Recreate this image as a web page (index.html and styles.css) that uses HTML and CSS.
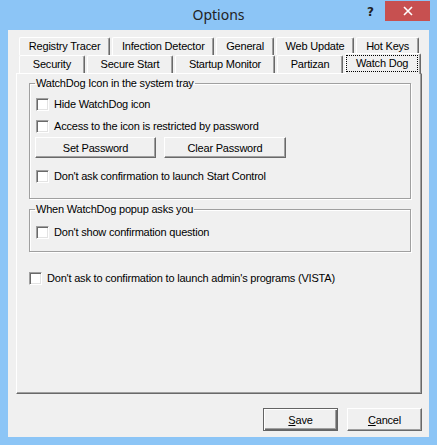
FILE: index.html
```html
<!DOCTYPE html>
<html lang="en">
<head>
	<meta charset="UTF-8">
	<title>Options</title>
	<link rel="stylesheet" href="styles.css">
</head>
<body>

	<div class="window">
		<div class="titlebar">
			<div></div>
			<div class="caption">Options</div>
			<div class="controls">
				<span class="help">?</span>
				<span class="close">
					<svg width="10" height="10" viewBox="0 0 10 10"><path d="M1 1 L9 9 M9 1 L1 9" stroke="#fff" stroke-width="1.6"/></svg>
				</span>
			</div>
		</div>

		<div class="client">
			<div class="tabs">
				<div class="tab-row back">
					<div class="tab">Registry Tracer</div>
					<div class="tab">Infection Detector</div>
					<div class="tab">General</div>
					<div class="tab">Web Update</div>
					<div class="tab">Hot Keys</div>
				</div>
				<div class="tab-row front">
					<div class="tab">Security</div>
					<div class="tab">Secure Start</div>
					<div class="tab">Startup Monitor</div>
					<div class="tab">Partizan</div>
					<div class="tab selected"><span class="focus">Watch Dog</span></div>
				</div>
			</div>

			<div class="panel">
				<fieldset class="group first">
					<legend>WatchDog Icon in the system tray</legend>
					<div class="check r1"><span class="box"></span>Hide WatchDog icon</div>
					<div class="check r2"><span class="box"></span>Access to the icon is restricted by password</div>
					<div class="btn-row">
						<div class="btn set">Set Password</div>
						<div class="btn clear">Clear Password</div>
					</div>
					<div class="check r3"><span class="box"></span>Don't ask confirmation to launch Start Control</div>
				</fieldset>

				<fieldset class="group second">
					<legend>When WatchDog popup asks you</legend>
					<div class="check r4"><span class="box"></span>Don't show confirmation question</div>
				</fieldset>

				<div class="check alone"><span class="box"></span>Don't ask to confirmation to launch admin's programs (VISTA)</div>
			</div>

			<div class="footer">
				<div class="btn dlg default"><u>S</u>ave</div>
				<div class="btn dlg"><u>C</u>ancel</div>
			</div>
		</div>
	</div>

</body>
</html>
```

FILE: styles.css
```css
* {
	box-sizing: border-box;
}

body {
	margin: 0;
	font-family: "Liberation Sans", Arial, sans-serif;
	font-size: 11px;
	letter-spacing: -0.2px;
	color: #000;
}

.window {
	width: 437px;
	height: 445px;
	background-color: #8cc5f6;
}

/********** title bar **********/
.titlebar {
	display: grid;
	grid-template-columns: 1fr auto 1fr;
	height: 30px;
	letter-spacing: 0;
}
.caption {
	font-family: "Noto Sans", sans-serif;
	font-size: 14px;
	color: #222;
	line-height: 30px;
}
.controls {
	display: flex;
	justify-content: flex-end;
	align-items: flex-start;
	margin-right: 7px;
}
.help {
	font-family: "DejaVu Sans", sans-serif;
	font-weight: bold;
	font-size: 12px;
	color: #222;
	margin-top: 5px;
	margin-right: 11px;
}
.close {
	display: flex;
	align-items: center;
	justify-content: center;
	width: 45px;
	height: 20px;
	margin-top: 1px;
	background-color: #c75050;
}

/********** client **********/
.client {
	display: flex;
	flex-direction: column;
	margin: 0 8px;
	height: 407px;
	padding: 7px 0 0 8px;
	background-color: #f0f0f0;
}

.tabs {
	margin-left: 3px;
	width: 400px;
}
.tab-row {
	display: flex;
	align-items: flex-start;
	gap: 2px;
	height: 18px;
}
.tab {
	flex: 1 1 auto;
	height: 18px;
	line-height: 16px;
	padding: 0 4px;
	text-align: center;
	white-space: nowrap;
	background-color: #f0f0f0;
	border: 1px solid #fff;
	border-right-color: #696969;
	border-bottom: 0;
	border-radius: 2px 2px 0 0;
	box-shadow: inset -1px 0 #a0a0a0;
}
.tab.selected {
	position: relative;
	z-index: 1;
	display: flex;
	height: 21px;
	margin: -2px -2px 0 0;
	padding: 0;
}
.tab.selected .focus {
	flex: 1;
	height: 17px;
	line-height: 15px;
	margin: 1px 2px 0 0;
	border: 1px dotted #000;
}

/********** panel **********/
.panel {
	width: 406px;
	height: 321px;
	padding: 3px 0 0 12px;
	border: 1px solid #fff;
	border-right-color: #696969;
	border-bottom-color: #696969;
	box-shadow: inset -1px -1px #a0a0a0;
}

.group {
	width: 382px;
	margin: 0;
	padding: 0 0 0 6px;
	border: 1px solid #a0a0a0;
	box-shadow: inset 1px 1px #fff, 1px 1px #fff;
}
.group legend {
	padding: 0 1px;
	margin-left: -1px;
	line-height: 13px;
}
.group.first {
	padding-bottom: 15px;
}
.group.second {
	margin-top: 4px;
	padding-bottom: 12px;
}

.check {
	display: flex;
	align-items: center;
	gap: 5px;
	height: 13px;
	line-height: 13px;
	white-space: nowrap;
}
.box {
	width: 13px;
	height: 13px;
	flex: none;
	background-color: #fff;
	border: 1px solid #fff;
	border-top-color: #a0a0a0;
	border-left-color: #a0a0a0;
	box-shadow: inset 1px 1px #696969, inset -1px -1px #e3e3e3;
}
.r1 { margin-top: 8px; }
.r2 { margin-top: 9px; }
.r3 { margin-top: 12px; }
.r4 { margin-top: 10px; }
.alone {
	margin-top: 20px;
	margin-left: 0;
}

.btn-row {
	display: flex;
	gap: 8px;
	margin: 4px 0 0 -1px;
}
.btn {
	display: flex;
	align-items: center;
	justify-content: center;
	height: 21px;
	background-color: #f0f0f0;
	border: 1px solid #fff;
	border-right-color: #696969;
	border-bottom-color: #696969;
	box-shadow: inset -1px -1px #a0a0a0;
}
.btn.set { width: 121px; }
.btn.clear { width: 122px; }

/********** footer buttons **********/
.footer {
	display: flex;
	justify-content: flex-end;
	gap: 9px;
	width: 406px;
	margin-top: 14px;
}
.btn.dlg {
	width: 75px;
	height: 23px;
}
.btn.default {
	border: 1px solid #646464;
	box-shadow: inset 1px 1px #fff, inset -1px -1px #696969, inset -2px -2px #a0a0a0;
}
```
